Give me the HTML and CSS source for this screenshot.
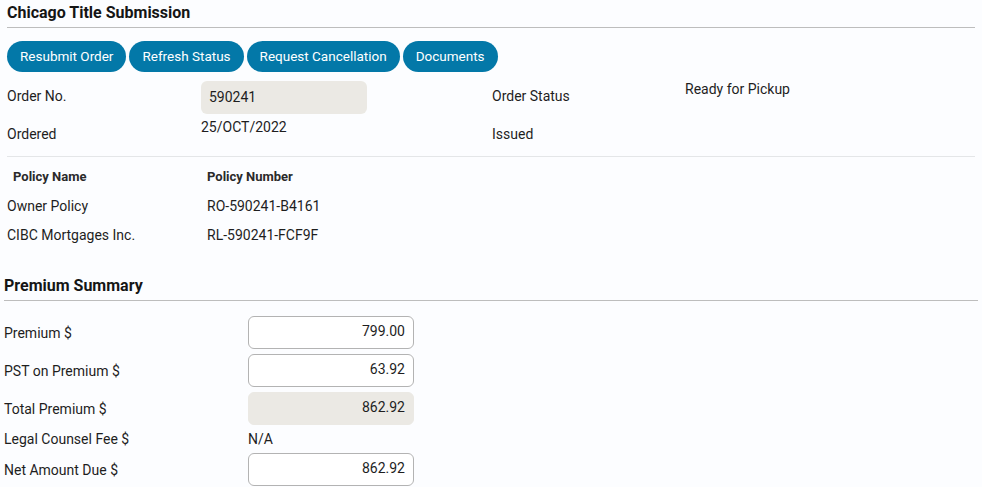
FILE: index.html
```html
<!DOCTYPE html>
<html lang="en">
<head>
<meta charset="utf-8">
<title>Chicago Title Submission</title>
<link rel="stylesheet" href="styles.css">
</head>
<body>
<section class="submission">
  <h2 class="section-title">Chicago Title Submission</h2>
  <div class="actions">
    <button class="btn">Resubmit Order</button>
    <button class="btn">Refresh Status</button>
    <button class="btn">Request Cancellation</button>
    <button class="btn">Documents</button>
  </div>
  <div class="order-grid">
    <div class="label">Order No.</div>
    <div class="value"><div class="readonly-box">590241</div></div>
    <div class="label">Order Status</div>
    <div class="value plain">Ready for Pickup</div>
    <div class="label">Ordered</div>
    <div class="value plain">25/OCT/2022</div>
    <div class="label">Issued</div>
    <div class="value plain"></div>
  </div>
  <div class="policies">
    <div class="policy-head name">Policy Name</div>
    <div class="policy-head">Policy Number</div>
    <div class="policy-cell">Owner Policy</div>
    <div class="policy-cell">RO-590241-B4161</div>
    <div class="policy-cell">CIBC Mortgages Inc.</div>
    <div class="policy-cell">RL-590241-FCF9F</div>
  </div>
</section>
<section class="premium">
  <h2 class="section-title">Premium Summary</h2>
  <div class="premium-grid">
    <div class="p-label">Premium $</div>
    <div class="p-value"><div class="amount">799.00</div></div>
    <div class="p-label">PST on Premium $</div>
    <div class="p-value"><div class="amount">63.92</div></div>
    <div class="p-label">Total Premium $</div>
    <div class="p-value"><div class="amount readonly">862.92</div></div>
    <div class="p-label short">Legal Counsel Fee $</div>
    <div class="p-value short">N/A</div>
    <div class="p-label">Net Amount Due $</div>
    <div class="p-value"><div class="amount">862.92</div></div>
  </div>
</section>
</body>
</html>
```

FILE: styles.css
```css
* { box-sizing: border-box; }

body {
  margin: 0;
  background: #fcfdff;
  font-family: Roboto, "Noto Sans", Arial, sans-serif;
  font-size: 14px;
  color: #1e1e1e;
}

.submission {
  padding: 0 7px;
}

.section-title {
  margin: 0;
  font-size: 16px;
  font-weight: 700;
  color: #151515;
  line-height: 20px;
  padding: 3px 0 4px;
  border-bottom: 1px solid #bdbdbd;
}

.actions {
  display: flex;
  gap: 3px;
  margin-top: 13px;
}

.btn {
  font-family: inherit;
  font-size: 13.5px;
  color: #ffffff;
  background: #0378a8;
  border: 0;
  border-radius: 16px;
  height: 31px;
  padding: 0 13px 1px;
  cursor: pointer;
}

.order-grid {
  display: grid;
  grid-template-columns: 194px 291px 193px 1fr;
  grid-auto-rows: 38px;
  margin-top: 7px;
  line-height: 20px;
  border-bottom: 1px solid #e4e6e8;
  padding-bottom: 1px;
}

.order-grid .label {
  padding-top: 7px;
}

.readonly-box {
  margin-top: 2px;
  width: 166px;
  height: 33px;
  background: #ebe9e4;
  border-radius: 6px;
  padding: 6px 8px;
}

.policies {
  display: grid;
  grid-template-columns: 200px 1fr;
  grid-auto-rows: 29px;
  padding-top: 10px;
  line-height: 20px;
}

.policy-head {
  font-size: 13px;
  font-weight: 700;
  color: #2a2a2a;
}

.policy-head.name {
  padding-left: 6px;
}

.premium {
  padding: 0 4px;
  margin-top: 19px;
}

.premium .section-title {
  padding-bottom: 4px;
}

.premium-grid {
  display: grid;
  grid-template-columns: 244px 166px;
  row-gap: 5px;
  margin-top: 15px;
}

.p-label,
.p-value {
  height: 33px;
  display: flex;
  align-items: center;
}

.p-label.short,
.p-value.short {
  height: 18px;
}

.amount {
  width: 166px;
  height: 33px;
  border: 1px solid #b3b3b3;
  border-radius: 6px;
  background: #ffffff;
  text-align: right;
  padding: 6px 8px 0 8px;
}

.amount.readonly {
  background: #ebe9e4;
  border-color: #ebe9e4;
}
```
